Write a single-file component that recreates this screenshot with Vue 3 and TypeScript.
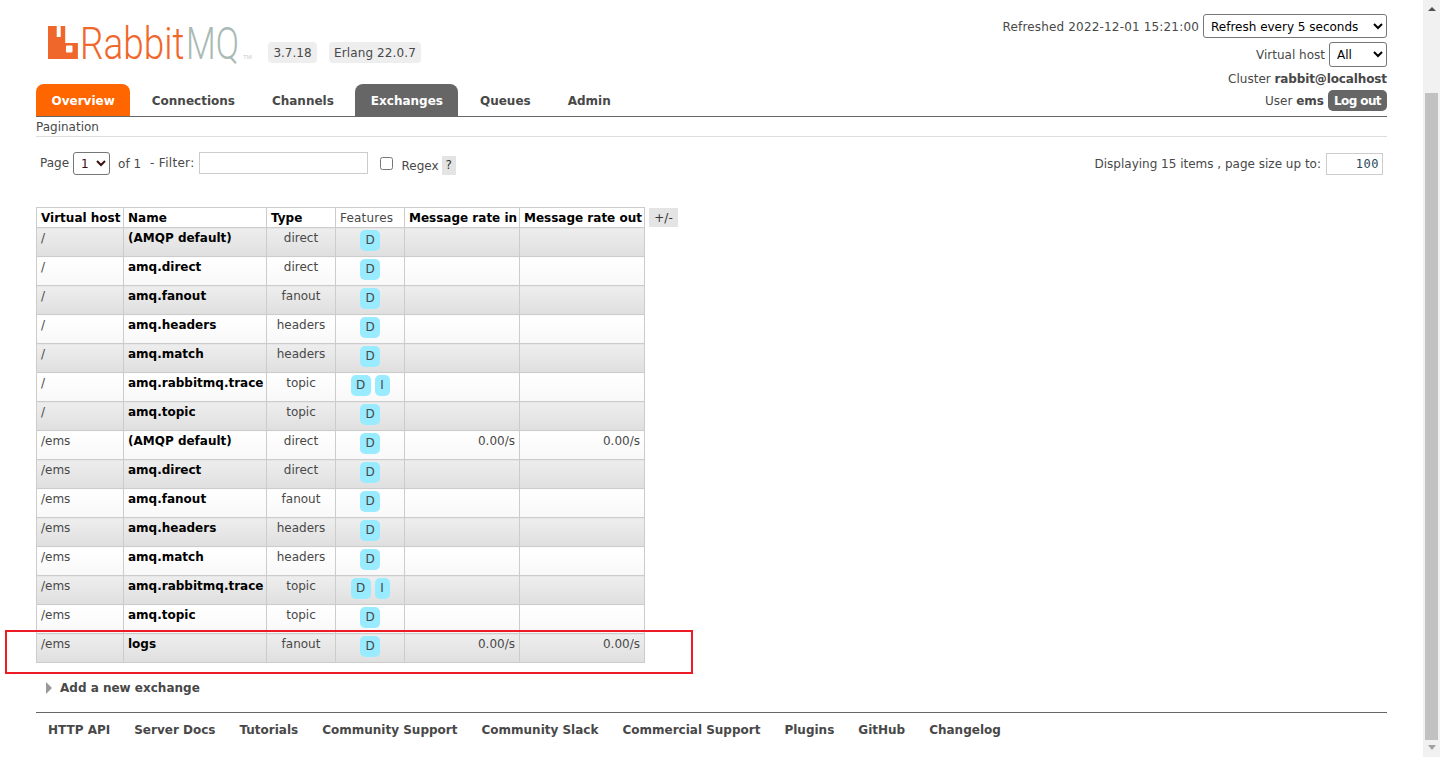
<script setup lang="ts">
interface Row { vhost: string; name: string; type: string; features: string[]; rateIn: string; rateOut: string }
const tabs = [
  { label: 'Overview', cls: 'orange' },
  { label: 'Connections', cls: '' },
  { label: 'Channels', cls: '' },
  { label: 'Exchanges', cls: 'grey' },
  { label: 'Queues', cls: '' },
  { label: 'Admin', cls: '' },
]
const base: [string, string, string[]][] = [
  ['(AMQP default)', 'direct', ['D']],
  ['amq.direct', 'direct', ['D']],
  ['amq.fanout', 'fanout', ['D']],
  ['amq.headers', 'headers', ['D']],
  ['amq.match', 'headers', ['D']],
  ['amq.rabbitmq.trace', 'topic', ['D', 'I']],
  ['amq.topic', 'topic', ['D']],
]
const rows: Row[] = [
  ...base.map(([name, type, features]) => ({ vhost: '/', name, type, features, rateIn: '', rateOut: '' })),
  ...base.map(([name, type, features], i) => ({
    vhost: '/ems', name, type, features,
    rateIn: i === 0 ? '0.00/s' : '', rateOut: i === 0 ? '0.00/s' : '',
  })),
  { vhost: '/ems', name: 'logs', type: 'fanout', features: ['D'], rateIn: '0.00/s', rateOut: '0.00/s' },
]
const links = ['HTTP API', 'Server Docs', 'Tutorials', 'Community Support', 'Community Slack', 'Commercial Support', 'Plugins', 'GitHub', 'Changelog']
</script>

<template>
  <div class="page">
    <header class="header">
      <div class="brand">
        <div class="logo-row">
          <svg class="logo" width="216" height="44" viewBox="48 20 216 44" role="img" aria-label="RabbitMQ">
            <path fill="#f0672b" fill-rule="evenodd" d="M48 26h8.700v11h4V26h4.500v17h12.700v16H48zM67 45.500a1 1 0 0 0-1 1v5a1 1 0 0 0 1 1h4.500a1 1 0 0 0 1-1v-5a1 1 0 0 0-1-1z" />
            <text transform="translate(80 58.500) scale(.84 1)" class="logo-text" fill="#f0672b">Rabbit</text>
            <text transform="translate(186 58.500) scale(.78 1)" class="logo-text" fill="#a9bab5">MQ</text>
            <text x="243" y="58.500" class="logo-tm" fill="#c4cdca">TM</text>
          </svg>
          <span class="badge first">3.7.18</span>
          <span class="badge erlang">Erlang 22.0.7</span>
        </div>
        <nav class="tabs">
          <a v-for="t in tabs" :key="t.label" class="tab" :class="t.cls">{{ t.label }}</a>
        </nav>
      </div>
      <div class="status">
        <div class="status-row refresh">
          <span class="refreshed">Refreshed 2022-12-01 15:21:00</span>
          <select class="sel sel-refresh"><option>Refresh every 5 seconds</option></select>
        </div>
        <div class="status-row vhost">
          <span>Virtual host</span>
          <select class="sel sel-vhost"><option>All</option></select>
        </div>
        <div class="status-row cluster"><span>Cluster <b>rabbit@localhost</b></span></div>
        <div class="status-row user">
          <span>User <b>ems</b></span>
          <span class="logout">Log out</span>
        </div>
      </div>
    </header>

    <h3 class="section-title">Pagination</h3>

    <div class="filter-row">
      <div class="filter-left">
        <span class="lbl-page">Page</span>
        <select class="sel sel-page"><option>1</option></select>
        <span class="lbl-of">of 1</span>
        <span class="lbl-filter">- Filter:</span>
        <input class="filter-input" type="text" />
        <input class="check" type="checkbox" />
        <span class="lbl-regex">Regex</span>
        <span class="help">?</span>
      </div>
      <div class="filter-right">
        <span>Displaying 15 items , page size up to:</span>
        <input class="size-input" type="text" value="100" />
      </div>
    </div>

    <div class="table-wrap">
      <table class="list">
        <colgroup>
          <col class="c1" /><col class="c2" /><col class="c3" />
          <col class="c4" /><col class="c5" /><col class="c6" />
        </colgroup>
        <thead>
          <tr>
            <th>Virtual host</th><th>Name</th><th>Type</th>
            <th class="plain">Features</th><th>Message rate in</th><th>Message rate out</th>
          </tr>
        </thead>
        <tbody>
          <tr v-for="(r, i) in rows" :key="r.vhost + r.name" :class="i % 2 ? 'alt2' : 'alt1'">
            <td>{{ r.vhost }}</td>
            <td class="name">{{ r.name }}</td>
            <td class="center">{{ r.type }}</td>
            <td class="center feat">
              <span v-for="f in r.features" :key="f" class="tag">{{ f }}</span>
            </td>
            <td class="right">{{ r.rateIn }}</td>
            <td class="right">{{ r.rateOut }}</td>
          </tr>
        </tbody>
      </table>
      <span class="columns">+/-</span>
    </div>

    <div class="add-new">
      <span class="tri"></span>
      <span>Add a new exchange</span>
    </div>

    <footer class="footer">
      <a v-for="l in links" :key="l" class="foot-link">{{ l }}</a>
    </footer>

    <div class="highlight"></div>

    <div class="scrollbar">
      <span class="arrow up"></span>
      <span class="thumb"></span>
      <span class="arrow down"></span>
    </div>
  </div>
</template>

<style>
html, body { margin: 0; overflow: hidden; background: #fff; }
</style>

<style scoped>
.page {
  position: relative;
  width: 1440px;
  height: 757px;
  box-sizing: border-box;
  padding: 0 53px 0 36px;
  overflow: hidden;
  font: 12px/1.25 "DejaVu Sans", Verdana, sans-serif;
  color: #484848;
  background: #fff;
}
.header {
  display: flex;
  justify-content: space-between;
  height: 116px;
  border-bottom: 1px solid #666;
}
.brand { display: flex; flex-direction: column; }
.logo-row { display: flex; height: 84px; padding-left: 12px; box-sizing: border-box; }
.logo { margin-top: 20px; flex: none; overflow: visible; }
.logo-text { font: 300 44px "Roboto", sans-serif; }
.logo-tm { font: 6px "Liberation Sans", sans-serif; }
.badge {
  align-self: flex-start;
  margin: 42px 0 0 12px;
  height: 21px;
  line-height: 23px;
  padding: 0 5px;
  background: #eee;
  border-radius: 4px;
}
.badge.first { margin-left: 4px; width: 39px; text-align: center; }
.badge.erlang { letter-spacing: 0.12px; }
.tabs { display: flex; gap: 6px; height: 32px; }
.tab {
  padding: 0 15.5px;
  line-height: 34px;
  font-weight: 700;
  border-radius: 8px 8px 0 0;
  white-space: nowrap;
}
.tab.orange { background: #f60; color: #fff; }
.tab.grey { background: #666; color: #fff; }
.status { display: flex; flex-direction: column; align-items: flex-end; padding-top: 14px; }
.status-row { display: flex; align-items: center; gap: 4px; white-space: nowrap; }
.status-row > span:not(.logout) { padding-top: 2px; }
.status-row b { font-weight: 700; }
.cluster b { letter-spacing: -0.12px; }
.refreshed { letter-spacing: 0.17px; }
.refresh { height: 24px; }
.vhost { height: 25px; margin-top: 4px; }
.cluster { height: 16px; margin-top: 3px; }
.user { height: 21px; margin-top: 4px; gap: 4px; }
.sel {
  font: 12px "DejaVu Sans", Verdana, sans-serif;
  color: #000;
  background: #fff;
  border: 1px solid #767676;
  border-radius: 3px;
  box-sizing: border-box;
  margin: 0;
  padding: 1px 0 0 3px;
}
.sel-refresh { width: 184px; height: 24px; }
.sel-vhost { width: 58px; height: 25px; }
.sel-page { width: 37px; height: 23px; color: #3a1010; }
.logout {
  display: block;
  width: 59px;
  height: 21px;
  line-height: 23px;
  text-align: center;
  background: #666;
  color: #fff;
  border-radius: 5px;
  font-size: 12px;
  font-weight: 700;
  letter-spacing: -0.6px;
}
.section-title {
  margin: 0;
  height: 18px;
  padding-top: 1px;
  line-height: 19px;
  font-size: 12px;
  font-weight: 400;
  border-bottom: 1px solid #ddd;
}
.filter-row {
  display: flex;
  justify-content: space-between;
  height: 70px;
  padding-top: 15px;
  box-sizing: border-box;
}
.filter-left { display: flex; align-items: flex-start; }
.lbl-page { margin: 4px 0 0 4px; }
.sel-page { margin-left: 4px; }
.lbl-of { margin: 5px 0 0 8px; }
.lbl-filter { margin: 4px 0 0 9px; letter-spacing: 0.3px; }
.filter-input {
  width: 169px;
  height: 22px;
  box-sizing: border-box;
  margin: 0 0 0 5px;
  border: 1px solid #ccc;
  padding: 0 4px;
}
.check { width: 13px; height: 13px; margin: 5px 0 0 12px; }
.lbl-regex { margin: 7px 0 0 8px; }
.help {
  width: 14px;
  height: 19px;
  line-height: 19px;
  margin: 4px 0 0 3px;
  text-align: center;
  background: #e4e4e4;
  color: #333;
}
.filter-right { display: flex; align-items: flex-start; padding-right: 4px; }
.filter-right span { margin-top: 5px; }
.size-input {
  width: 57px;
  height: 22px;
  box-sizing: border-box;
  margin: 1px 0 0 5px;
  border: 1px solid #ccc;
  padding: 0 3px;
  text-align: right;
  font: 12px "DejaVu Sans Mono", monospace;
  letter-spacing: 0.5px;
  color: #2a4a5a;
}
.table-wrap { display: flex; align-items: flex-start; }
.list {
  table-layout: fixed;
  width: 608px;
  border-collapse: collapse;
  border: 1px solid #ccc;
  flex: none;
}
.c1 { width: 87px; }
.c2 { width: 143px; }
.c3 { width: 69px; }
.c4 { width: 69px; }
.c5 { width: 115px; }
.c6 { width: 125px; }
.list th, .list td {
  border: 1px solid #ccc;
  padding: 0 4px;
  box-sizing: border-box;
  white-space: nowrap;
}
.list th {
  height: 20px;
  padding-top: 2px;
  text-align: left;
  color: #000;
  font-weight: 700;
}
.list th.plain { font-weight: 400; color: #484848; letter-spacing: 0.2px; }
.list td { height: 29px; vertical-align: top; padding-top: 3px; }
.list td.name { font-weight: 700; color: #000; }
.list td.center { text-align: center; }
.list td.right { text-align: right; }
.list td.feat { padding: 2px 0 0; }
tr.alt1 td { background: linear-gradient(#eee, #dfdfdf); }
tr.alt2 td { background: linear-gradient(#fff, #f8f8f8); }
.tag {
  display: inline-block;
  vertical-align: top;
  width: 20px;
  height: 21px;
  line-height: 21px;
  margin: 0 2px;
  text-align: center;
  background: #99ebff;
  border-radius: 5px;
}
.tag:nth-child(2) { width: 15px; }
.columns {
  flex: none;
  width: 29px;
  height: 19px;
  line-height: 21px;
  margin: 1px 0 0 4px;
  text-align: center;
  background: #e4e4e4;
  color: #333;
}
.add-new {
  display: flex;
  align-items: center;
  gap: 8px;
  height: 18px;
  margin-top: 16px;
  padding-left: 10px;
  font-weight: 700;
}
.tri {
  width: 0;
  height: 0;
  border-left: 6px solid #999;
  border-top: 6px solid transparent;
  border-bottom: 6px solid transparent;
}
.footer {
  display: flex;
  margin-top: 15px;
  padding-top: 10px;
  border-top: 1px solid #666;
  font-weight: 700;
}
.foot-link { padding: 0 12px; white-space: nowrap; }
.highlight {
  position: absolute;
  left: 5px;
  top: 630px;
  width: 688px;
  height: 44px;
  box-sizing: border-box;
  border: 2px solid #ed1c24;
  pointer-events: none;
}
.scrollbar {
  position: absolute;
  left: 1423px;
  top: 0;
  width: 17px;
  height: 757px;
  background: #f1f1f1;
}
.thumb {
  position: absolute;
  left: 2px;
  top: 93px;
  width: 13px;
  height: 647px;
  background: #c1c1c1;
}
.arrow {
  position: absolute;
  left: 4.500px;
  width: 0;
  height: 0;
  border-left: 4px solid transparent;
  border-right: 4px solid transparent;
}
.arrow.up { top: 7px; border-bottom: 4px solid #505050; }
.arrow.down { top: 745px; border-top: 5px solid #a3a3a3; }
</style>
